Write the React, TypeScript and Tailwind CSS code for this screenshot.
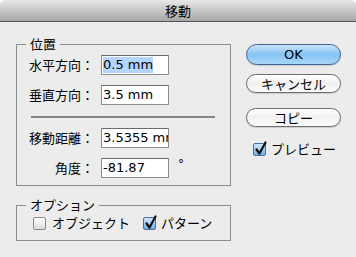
import React from "react";

const jp = "font-['Noto_Sans_CJK_JP',sans-serif]";
const num = "font-['DejaVu_Sans',sans-serif]";

function Check({ checked }: { checked: boolean }) {
  return (
    <span
      className={
        "relative inline-block w-[13px] h-[13px] shrink-0 rounded-[2px] border " +
        (checked
          ? "border-[#4d6f9c] bg-gradient-to-b from-[#d3e8fa] to-[#6eb1ea]"
          : "border-[#8a8a8a] bg-gradient-to-b from-[#ffffff] to-[#dcdcdc]")
      }
    >
      {checked && (
        <svg className="absolute left-[0px] top-[-3px]" width="14" height="15" viewBox="0 0 14 15">
          <path d="M2.5 8.5 L5.5 12.5 L11.5 1.5" fill="none" stroke="#111" strokeWidth="2.2" strokeLinecap="round" strokeLinejoin="round" />
        </svg>
      )}
    </span>
  );
}

function Field({ children }: { children: React.ReactNode }) {
  return (
    <div className={`w-[68px] h-[20px] shrink-0 flex items-center pl-[1px] overflow-hidden whitespace-nowrap bg-white border border-[#8e8e8e] border-t-[#6c6c6c] text-[13px] leading-[16px] text-black ${num}`}>
      {children}
    </div>
  );
}

function Row({ label, children, extra }: { label: string; children: React.ReactNode; extra?: React.ReactNode }) {
  return (
    <div className="flex items-center h-[20px]">
      <div className={`w-[77px] text-right text-[13px] leading-[16px] text-black ${jp}`}>{label}</div>
      <div className="w-[7px]" />
      <Field>{children}</Field>
      {extra}
    </div>
  );
}

function Button({ children, primary, className }: { children: React.ReactNode; primary?: boolean; className: string }) {
  return (
    <div
      className={
        "w-[95px] flex items-center justify-center rounded-full border text-[13px] leading-[16px] text-black shadow-[0_1px_1px_rgba(0,0,0,0.15)] " +
        (primary
          ? "border-[#3f6393] bg-gradient-to-b from-[#c9e4fb] via-[#86c3f3] to-[#a9d6fa] "
          : "border-[#6e6e6e] bg-gradient-to-b from-[#ffffff] via-[#f1f1f1] to-[#fbfbfb] ") +
        className
      }
    >
      {children}
    </div>
  );
}

export default function App() {
  return (
    <div className="w-[356px] h-[257px] bg-white">
      <div className="w-[356px] h-[257px] rounded-t-[5px] overflow-hidden bg-[#ececec] flex flex-col">
        {/* Title bar */}
        <div className={`h-[22px] shrink-0 flex items-center justify-center border-b border-[#565656] bg-gradient-to-b from-[#e8e8e8] to-[#a7a7a7] text-[13px] leading-[16px] text-black ${jp}`}>
          移動
        </div>

        <div className="flex flex-1">
          {/* Left column */}
          <div className="pl-[16px] w-[231px] shrink-0">
            <fieldset className="mt-[14px] w-[215px] border border-[#8c8c8c] pt-[3px] pb-[7px]">
              <legend className={`ml-[9px] px-[4px] text-[13px] leading-[16px] text-black ${jp}`}>位置</legend>
              <Row label="水平方向：">
                <span className="bg-[#b4d5fe]">0.5 mm</span>
              </Row>
              <div className="mt-[10px]">
                <Row label="垂直方向：">3.5 mm</Row>
              </div>
              <div className="ml-[14px] mt-[11px] w-[184px] h-[2px] bg-[#868686]" />
              <div className="mt-[10px]">
                <Row label="移動距離：">3.5355 mm</Row>
              </div>
              <div className="mt-[10px]">
                <Row
                  label="角度："
                  extra={<span className={`ml-[9px] self-start mt-[-2px] text-[12px] leading-[16px] ${num}`}>°</span>}
                >
                  -81.87
                </Row>
              </div>
            </fieldset>

            <fieldset className="mt-[11px] w-[215px] border border-[#8c8c8c] pb-[7px]">
              <legend className={`ml-[9px] px-[4px] text-[13px] leading-[16px] text-black ${jp}`}>オプション</legend>
              <div className={`flex items-center h-[20px] pl-[16px] text-[13px] leading-[16px] text-black ${jp}`}>
                <Check checked={false} />
                <span className="ml-[6px]">オブジェクト</span>
                <span className="ml-[13px] flex items-center">
                  <Check checked={true} />
                </span>
                <span className="ml-[5px]">パターン</span>
              </div>
            </fieldset>
          </div>

          {/* Right column */}
          <div className={`pl-[15px] pt-[22px] flex flex-col ${jp}`}>
            <Button primary className={`h-[21px] ${num}`}>OK</Button>
            <Button className="h-[19px] mt-[9px]">キャンセル</Button>
            <Button className="h-[19px] mt-[15px]">コピー</Button>
            <div className="mt-[15px] h-[14px] pl-[7px] flex items-center text-[13px] leading-[16px] text-black">
              <Check checked={true} />
              <span className="ml-[5px]">プレビュー</span>
            </div>
          </div>
        </div>
      </div>
    </div>
  );
}
